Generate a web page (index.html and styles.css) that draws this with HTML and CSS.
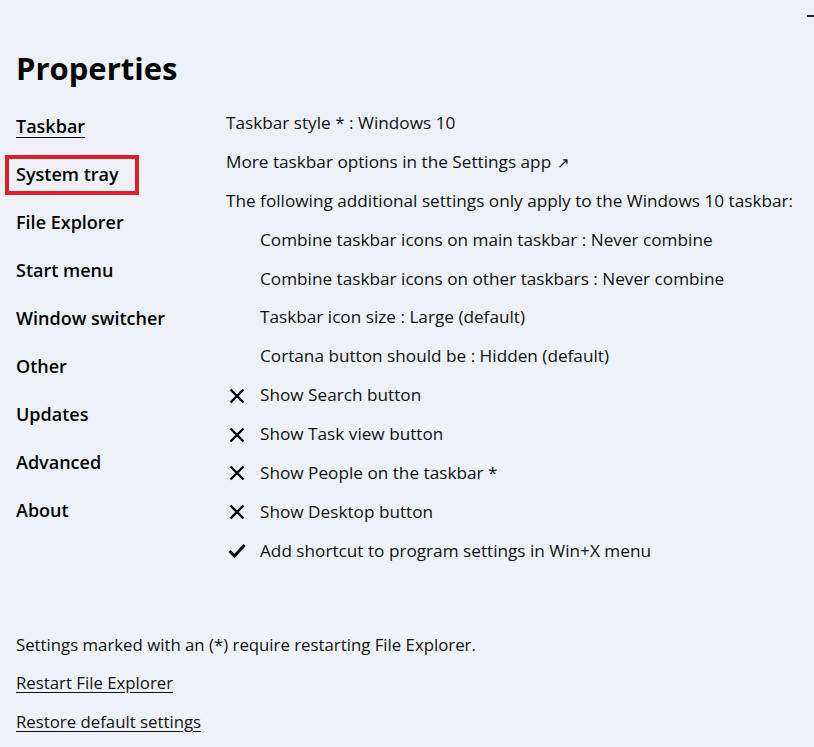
FILE: index.html
```html
<!DOCTYPE html>
<html lang="en">
<head>
    <meta charset="UTF-8">
    <title>Properties</title>
    <link rel="stylesheet" href="styles.css">
</head>
<body>
    <span class="minimize"></span>

    <h1 class="title">Properties</h1>

    <div class="layout">
        <nav class="sidebar">
            <a href="#" class="nav-item active">Taskbar</a>
            <a href="#" class="nav-item focused">System tray</a>
            <a href="#" class="nav-item">File Explorer</a>
            <a href="#" class="nav-item">Start menu</a>
            <a href="#" class="nav-item">Window switcher</a>
            <a href="#" class="nav-item">Other</a>
            <a href="#" class="nav-item">Updates</a>
            <a href="#" class="nav-item">Advanced</a>
            <a href="#" class="nav-item">About</a>
        </nav>

        <section class="settings">
            <div class="row">Taskbar style * : Windows 10</div>
            <div class="row">More taskbar options in the Settings app <span class="arrow">&#8599;</span></div>
            <div class="row">The following additional settings only apply to the Windows 10 taskbar:</div>
            <div class="row indent">Combine taskbar icons on main taskbar : Never combine</div>
            <div class="row indent">Combine taskbar icons on other taskbars : Never combine</div>
            <div class="row indent">Taskbar icon size : Large (default)</div>
            <div class="row indent">Cortana button should be : Hidden (default)</div>
            <div class="row check">
                <svg class="icon" viewBox="0 0 16 16"><path d="M1.5 1.5 L14.5 14.5 M14.5 1.5 L1.5 14.5" /></svg>
                <span>Show Search button</span>
            </div>
            <div class="row check">
                <svg class="icon" viewBox="0 0 16 16"><path d="M1.5 1.5 L14.5 14.5 M14.5 1.5 L1.5 14.5" /></svg>
                <span>Show Task view button</span>
            </div>
            <div class="row check">
                <svg class="icon" viewBox="0 0 16 16"><path d="M1.5 1.5 L14.5 14.5 M14.5 1.5 L1.5 14.5" /></svg>
                <span>Show People on the taskbar *</span>
            </div>
            <div class="row check">
                <svg class="icon" viewBox="0 0 16 16"><path d="M1.5 1.5 L14.5 14.5 M14.5 1.5 L1.5 14.5" /></svg>
                <span>Show Desktop button</span>
            </div>
            <div class="row check">
                <svg class="icon tick" viewBox="0 0 18 16"><path d="M1.5 8 L6.5 13 L16.5 2" /></svg>
                <span>Add shortcut to program settings in Win+X menu</span>
            </div>
        </section>
    </div>

    <footer class="footer">
        <div class="row">Settings marked with an (*) require restarting File Explorer.</div>
        <div class="row"><a href="#" class="link">Restart File Explorer</a></div>
        <div class="row"><a href="#" class="link">Restore default settings</a></div>
    </footer>
</body>
</html>
```

FILE: styles.css
```css
body {
    font-family: "Open Sans", "Noto Sans", sans-serif;
    font-size: 17.2px;
    color: #111;
    margin: 0;
    padding: 0 16px;
    background: linear-gradient(160deg, #edf0f7 0%, #eef1f8 60%, #f1f3f9 100%);
    min-height: 747px;
    box-sizing: border-box;
    position: relative;
}

.minimize {
    position: absolute;
    top: 15px;
    right: 0;
    width: 7px;
    height: 2px;
    background: #222;
}

.title {
    margin: 0;
    padding-top: 44px;
    font-size: 31px;
    line-height: 48px;
    font-weight: 700;
    color: #000;
}

.layout {
    display: flex;
    margin-top: 10px;
}

.sidebar {
    width: 210px;
    flex-shrink: 0;
    display: flex;
    flex-direction: column;
}

.nav-item {
    position: relative;
    display: block;
    height: 48px;
    line-height: 48px;
    font-size: 18px;
    font-weight: 600;
    color: #000;
    text-decoration: none;
    align-self: flex-start;
}

.nav-item.active {
    text-decoration: underline;
    text-underline-offset: 4px;
}

.nav-item.focused::after {
    content: "";
    position: absolute;
    left: -11px;
    width: 134px;
    top: 5px;
    bottom: 3px;
    border: 4px solid #dc1f2b;
    box-sizing: border-box;
}

.settings {
    display: flex;
    flex-direction: column;
    padding-top: 2px;
}

.row {
    height: 38.9px;
    line-height: 38.9px;
    white-space: nowrap;
    display: flex;
    align-items: center;
}

.indent {
    padding-left: 34px;
}

.arrow {
    font-size: 15px;
    margin-left: 6px;
}

.check {
    gap: 15px;
    padding-left: 3px;
}

.icon {
    width: 16px;
    height: 16px;
    fill: none;
    stroke: #000;
    stroke-width: 2.4;
}

.icon.tick {
    width: 18px;
    margin-left: -1px;
    margin-right: -1px;
    stroke-width: 3;
}

.footer {
    margin-top: 55px;
    font-size: 16.8px;
    display: flex;
    flex-direction: column;
}

.footer .row {
    height: 38.5px;
    line-height: 38.5px;
}

.link {
    color: #111;
    text-decoration: underline;
    text-underline-offset: 3px;
}
```
